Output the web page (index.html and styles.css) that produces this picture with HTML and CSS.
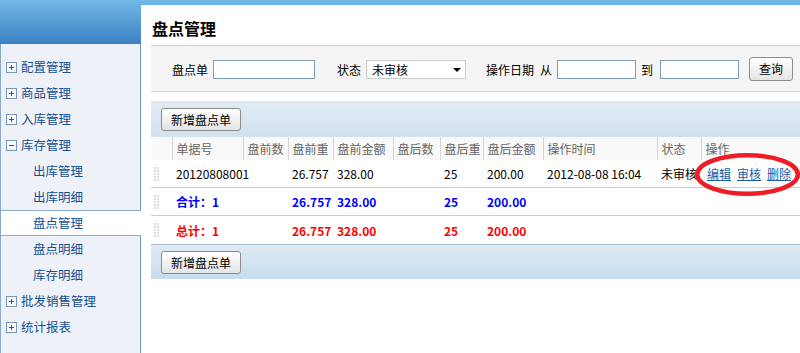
FILE: index.html
```html
<!DOCTYPE html>
<html lang="zh-CN">
<head>
    <meta charset="UTF-8">
    <title>盘点管理</title>
    <link rel="stylesheet" href="styles.css">
</head>
<body>
    <div class="page">
        <div class="side">
            <ul class="menu">
                <li><span class="toggle plus"></span>配置管理</li>
                <li><span class="toggle plus"></span>商品管理</li>
                <li><span class="toggle plus"></span>入库管理</li>
                <li><span class="toggle"></span>库存管理</li>
                <li class="sub">出库管理</li>
                <li class="sub">出库明细</li>
                <li class="sub active">盘点管理</li>
                <li class="sub">盘点明细</li>
                <li class="sub">库存明细</li>
                <li><span class="toggle plus"></span>批发销售管理</li>
                <li><span class="toggle plus"></span>统计报表</li>
            </ul>
        </div>

        <div class="main">
            <h2 class="page-title">盘点管理</h2>

            <form class="filter">
                <label for="billNo">盘点单</label>
                <input type="text" id="billNo" class="txt">
                <label for="status" class="gap-l">状态</label>
                <span class="select-box">
                    <select id="status">
                        <option>未审核</option>
                        <option>已审核</option>
                    </select>
                </span>
                <span class="gap-l2">操作日期</span>
                <label for="dateFrom" class="from">从</label>
                <input type="text" id="dateFrom" class="txt short">
                <label for="dateTo">到</label>
                <input type="text" id="dateTo" class="txt short">
                <button type="button" class="btn search">查询</button>
            </form>

            <div class="grid">
                <div class="toolbar"><button type="button" class="btn">新增盘点单</button></div>
                <table class="list">
                    <colgroup>
                        <col style="width:21px"><col style="width:71px"><col style="width:45px"><col style="width:45px">
                        <col style="width:60px"><col style="width:47px"><col style="width:43px"><col style="width:60px">
                        <col style="width:114px"><col style="width:44px"><col>
                    </colgroup>
                    <thead>
                        <tr>
                            <th class="handle"></th>
                            <th>单据号</th>
                            <th>盘前数</th>
                            <th>盘前重</th>
                            <th>盘前金额</th>
                            <th>盘后数</th>
                            <th>盘后重</th>
                            <th>盘后金额</th>
                            <th>操作时间</th>
                            <th>状态</th>
                            <th>操作</th>
                        </tr>
                    </thead>
                    <tbody>
                        <tr>
                            <td><span class="grip"></span></td>
                            <td>20120808001</td>
                            <td></td>
                            <td>26.757</td>
                            <td>328.00</td>
                            <td></td>
                            <td>25</td>
                            <td>200.00</td>
                            <td>2012-08-08 16:04</td>
                            <td>未审核</td>
                            <td class="ops"><a href="#">编辑</a><a href="#">审核</a><a href="#">删除</a></td>
                        </tr>
                        <tr class="sum">
                            <td><span class="grip"></span></td>
                            <td>合计：1</td>
                            <td></td>
                            <td>26.757</td>
                            <td>328.00</td>
                            <td></td>
                            <td>25</td>
                            <td>200.00</td>
                            <td></td>
                            <td></td>
                            <td></td>
                        </tr>
                        <tr class="total">
                            <td><span class="grip"></span></td>
                            <td>总计：1</td>
                            <td></td>
                            <td>26.757</td>
                            <td>328.00</td>
                            <td></td>
                            <td>25</td>
                            <td>200.00</td>
                            <td></td>
                            <td></td>
                            <td></td>
                        </tr>
                    </tbody>
                </table>
                <div class="toolbar bottom"><button type="button" class="btn">新增盘点单</button></div>

                <!-- red circle drawn over the action links -->
                <svg class="mark" width="110" height="48" viewBox="0 0 110 48">
                    <ellipse cx="55.5" cy="23.5" rx="50.3" ry="19.3" fill="none" stroke="#ee1c24" stroke-width="4.5"/>
                </svg>
            </div>
        </div>
    </div>
</body>
</html>
```

FILE: styles.css
```css
body {
    margin: 0;
    font-family: "Noto Sans CJK SC", "Liberation Sans", sans-serif;
    font-size: 12px;
    color: #000;
    background: linear-gradient(#72b8e7, #3b82c3) 0 0 / 100% 44px no-repeat, #fff;
    overflow: hidden;
}
.page {
    display: flex;
    height: 100vh;
}

/* left menu */
.side {
    width: 139px;
    margin-top: 44px;
    background-color: #eef2f8;
    border-left: 1px solid #8aa8c8;
    border-right: 1px solid #6f98c2;
}
.menu {
    list-style: none;
    margin: 0;
    padding: 10px 0 0;
}
.menu li {
    height: 24px;
    line-height: 24px;
    border-top: 1px solid transparent;
    border-bottom: 1px solid transparent;
    padding-left: 5px;
    color: #15508f;
    font-size: 12.5px;
    white-space: nowrap;
}
.menu li.sub {
    padding-left: 32px;
}
.menu li.active {
    background-color: #fff;
    border-color: #8eaccc;
    margin-right: -1px;
}
.toggle {
    display: inline-block;
    position: relative;
    width: 9px;
    height: 9px;
    border: 1px solid #7898be;
    background-color: #f7faff;
    vertical-align: middle;
    margin: -3px 4px 0 0;
}
.toggle::before {
    content: "";
    position: absolute;
    left: 2px;
    top: 4px;
    width: 5px;
    height: 1px;
    background-color: #2a5a90;
}
.toggle.plus::after {
    content: "";
    position: absolute;
    left: 4px;
    top: 2px;
    width: 1px;
    height: 5px;
    background-color: #2a5a90;
}

/* main panel */
.main {
    flex: 1;
    margin-top: 5px;
    padding-left: 10px;
    background-color: #fff;
}
.page-title {
    margin: 0;
    height: 41px;
    box-sizing: border-box;
    padding: 7px 0 0 1px;
    line-height: 33px;
    font-size: 16px;
    font-weight: bold;
    border-bottom: 1px solid #cfcfcf;
}
.filter {
    display: flex;
    align-items: center;
    height: 46px;
    box-sizing: border-box;
    padding: 1px 0 0 21px;
    background-color: #f5f5f5;
    border-bottom: 1px solid #cfcfcf;
}
.filter label {
    margin-right: 5px;
}
.filter .gap-l {
    margin-left: 22px;
}
.filter .gap-l2 {
    margin-left: 20px;
}
.filter .from {
    margin-left: 6px;
}
.txt {
    width: 102px;
    height: 19px;
    box-sizing: border-box;
    border: 1px solid #7f9db9;
    background-color: #fff;
    padding: 0 3px;
    margin: 0;
    font: inherit;
}
.txt.short {
    width: 79px;
    margin-right: 5px;
}
#dateTo {
    margin-left: 2px;
    margin-right: 10px;
}
.select-box {
    position: relative;
    display: inline-block;
    width: 100px;
    height: 19px;
}
.select-box select {
    appearance: none;
    width: 100%;
    height: 19px;
    box-sizing: border-box;
    border: 1px solid #cccccc;
    border-radius: 0;
    background-color: #fff;
    padding: 0 0 0 5px;
    font: inherit;
    color: #000;
}
.select-box::after {
    content: "";
    position: absolute;
    right: 5px;
    top: 8px;
    border-left: 4px solid transparent;
    border-right: 4px solid transparent;
    border-top: 4px solid #000;
    pointer-events: none;
}
.btn {
    height: 23px;
    padding: 0 9px;
    border: 1px solid #8c8c8c;
    border-radius: 3px;
    background: linear-gradient(#ffffff, #e4e4e4);
    font: inherit;
    color: #000;
    cursor: pointer;
}
.btn.search {
    height: 24px;
    margin-top: -1px;
}

/* list */
.grid {
    position: relative;
    margin-top: 9px;
}
.toolbar {
    height: 36px;
    box-sizing: border-box;
    padding: 7px 0 0 10px;
    background: linear-gradient(#e2ebf4, #d2e1ee);
}
.toolbar.bottom {
    height: 35px;
    padding-top: 6px;
    border-top: 1px solid #a4bdd4;
    background: linear-gradient(#e0eaf3, #c6dcef);
}
.list {
    width: 100%;
    border-collapse: collapse;
    table-layout: fixed;
}
.list th {
    height: 23px;
    padding: 0 4px;
    background-color: #f9f9f9;
    border-left: 1px solid #d4d4d4;
    color: #666;
    font-weight: normal;
    text-align: left;
    white-space: nowrap;
}
.list th.handle {
    border-left: none;
}
.list td {
    height: 27px;
    padding: 0 4px;
    border-bottom: 1px solid #cdcdcd;
    white-space: nowrap;
    overflow: visible;
}
.list tr.total td {
    border-bottom: none;
    height: 28px;
}
.list td:first-child {
    padding: 0 0 0 2px;
}
.grip {
    display: block;
    width: 7px;
    height: 16px;
    background-image: linear-gradient(#fff 1px, transparent 1px), linear-gradient(90deg, #fff 1px, #dcdcdc 1px);
    background-size: 3px 3px;
}
.sum td {
    color: #0000ff;
    font-weight: bold;
}
.total td {
    color: #ff0000;
    font-weight: bold;
}
.ops {
    padding-left: 6px !important;
}
.ops a {
    color: #1a5b9c;
    text-decoration: underline;
    margin-right: 6px;
}
.mark {
    position: absolute;
    left: 541px;
    top: 50px;
    pointer-events: none;
}
```
